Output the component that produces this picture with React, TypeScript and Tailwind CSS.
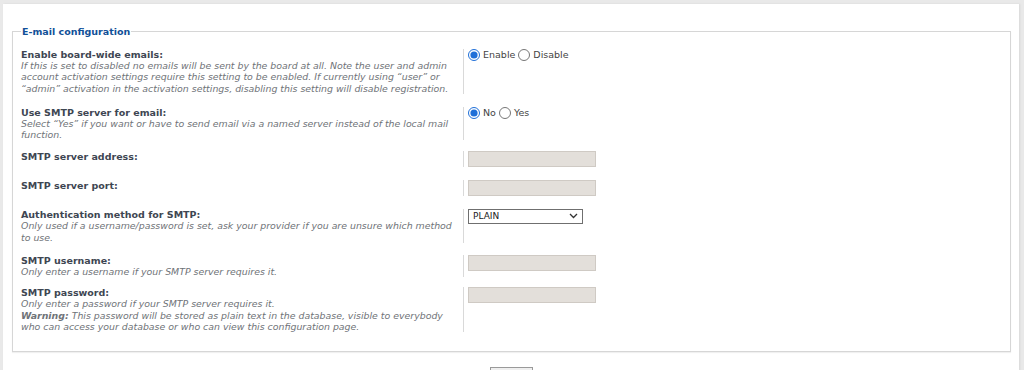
import type { ReactNode } from "react";

const font = { fontFamily: '"DejaVu Sans", Verdana, sans-serif' };

function Row({
  title,
  children,
  control,
  className,
}: {
  title: string;
  children?: ReactNode;
  control: ReactNode;
  className?: string;
}) {
  return (
    <div className={`flex ${className ?? ""}`}>
      <div className="w-[442px] shrink-0 pr-[4px]">
        <div className="text-[9.5px] font-bold leading-[11px] text-[#3e4652]">{title}</div>
        {children && <div className="text-[9.4px] italic leading-[11.3px] text-[#6f7378]">{children}</div>}
      </div>
      <div className="border-l border-[#d9d9d9] pl-[4px]">{control}</div>
    </div>
  );
}

function TextBox() {
  return <input type="text" className="block h-[16px] w-[128px] border border-[#cfcac4] bg-[#e3dfda] outline-none" />;
}

function RadioPair({ on, off, name }: { on: string; off: string; name: string }) {
  return (
    <div className="flex h-[12px] items-center text-[9.5px] leading-[12px] text-[#444]">
      <input type="radio" name={name} defaultChecked className="m-0 h-[12px] w-[12px] accent-[#1f6fd8]" />
      <span className="ml-[3px]">{on}</span>
      <input type="radio" name={name} className="m-0 ml-[3px] h-[12px] w-[12px]" />
      <span className="ml-[3px]">{off}</span>
    </div>
  );
}

export default function App() {
  return (
    <div className="h-[370px] overflow-hidden bg-[#e9e9e9] pl-[3px] pt-[4px]" style={font}>
      <div className="w-[1016px] bg-white pb-[40px] pl-[9px] pr-[8px] pt-[21px] shadow-[1px_0_2px_rgba(0,0,0,0.08)]">
        <fieldset className="border border-[#d6d6d6] px-[8px] pb-[19px] pt-[11px] shadow-[0_1px_1px_rgba(0,0,0,0.06)]">
          <legend className="px-[1px] text-[9.5px] font-bold leading-[13px] text-[#115098]">E-mail configuration</legend>

          <Row title="Enable board-wide emails:" control={<RadioPair name="email" on="Enable" off="Disable" />}>
            If this is set to disabled no emails will be sent by the board at all. Note the user and admin account
            activation settings require this setting to be enabled. If currently using “user” or “admin” activation in
            the activation settings, disabling this setting will disable registration.
          </Row>

          <Row className="mt-[13px]" title="Use SMTP server for email:" control={<RadioPair name="smtp" on="No" off="Yes" />}>
            Select “Yes” if you want or have to send email via a named server instead of the local mail function.
          </Row>

          <Row className="mt-[11px]" title="SMTP server address:" control={<TextBox />} />

          <Row className="mt-[13px]" title="SMTP server port:" control={<TextBox />} />

          <Row
            className="mt-[13px]"
            title="Authentication method for SMTP:"
            control={
              <div className="relative h-[15px] w-[115px]">
                <select className="block h-[15px] w-[115px] appearance-none border border-[#6f6f6f] bg-white pl-[4px] text-[9px] leading-[13px] text-[#222] outline-none">
                  <option>PLAIN</option>
                  <option>LOGIN</option>
                  <option>CRAM-MD5</option>
                  <option>DIGEST-MD5</option>
                  <option>POP-BEFORE-SMTP</option>
                </select>
                <svg className="pointer-events-none absolute right-[5px] top-[4px]" width="9" height="6" viewBox="0 0 9 6">
                  <path d="M1 1l3.5 3.5L8 1" fill="none" stroke="#333" strokeWidth="1.3" />
                </svg>
              </div>
            }
          >
            Only used if a username/password is set, ask your provider if you are unsure which method to use.
          </Row>

          <Row className="mt-[12px]" title="SMTP username:" control={<TextBox />}>
            Only enter a username if your SMTP server requires it.
          </Row>

          <Row className="mt-[10px]" title="SMTP password:" control={<TextBox />}>
            Only enter a password if your SMTP server requires it.
            <br />
            <strong>Warning:</strong> This password will be stored as plain text in the database, visible to everybody
            who can access your database or who can view this configuration page.
          </Row>
        </fieldset>

        <div className="mt-[15px] flex justify-center">
          <button type="button" className="h-[20px] w-[43px] border border-[#9a9a9a] bg-[#efefef]" />
        </div>
      </div>
    </div>
  );
}
